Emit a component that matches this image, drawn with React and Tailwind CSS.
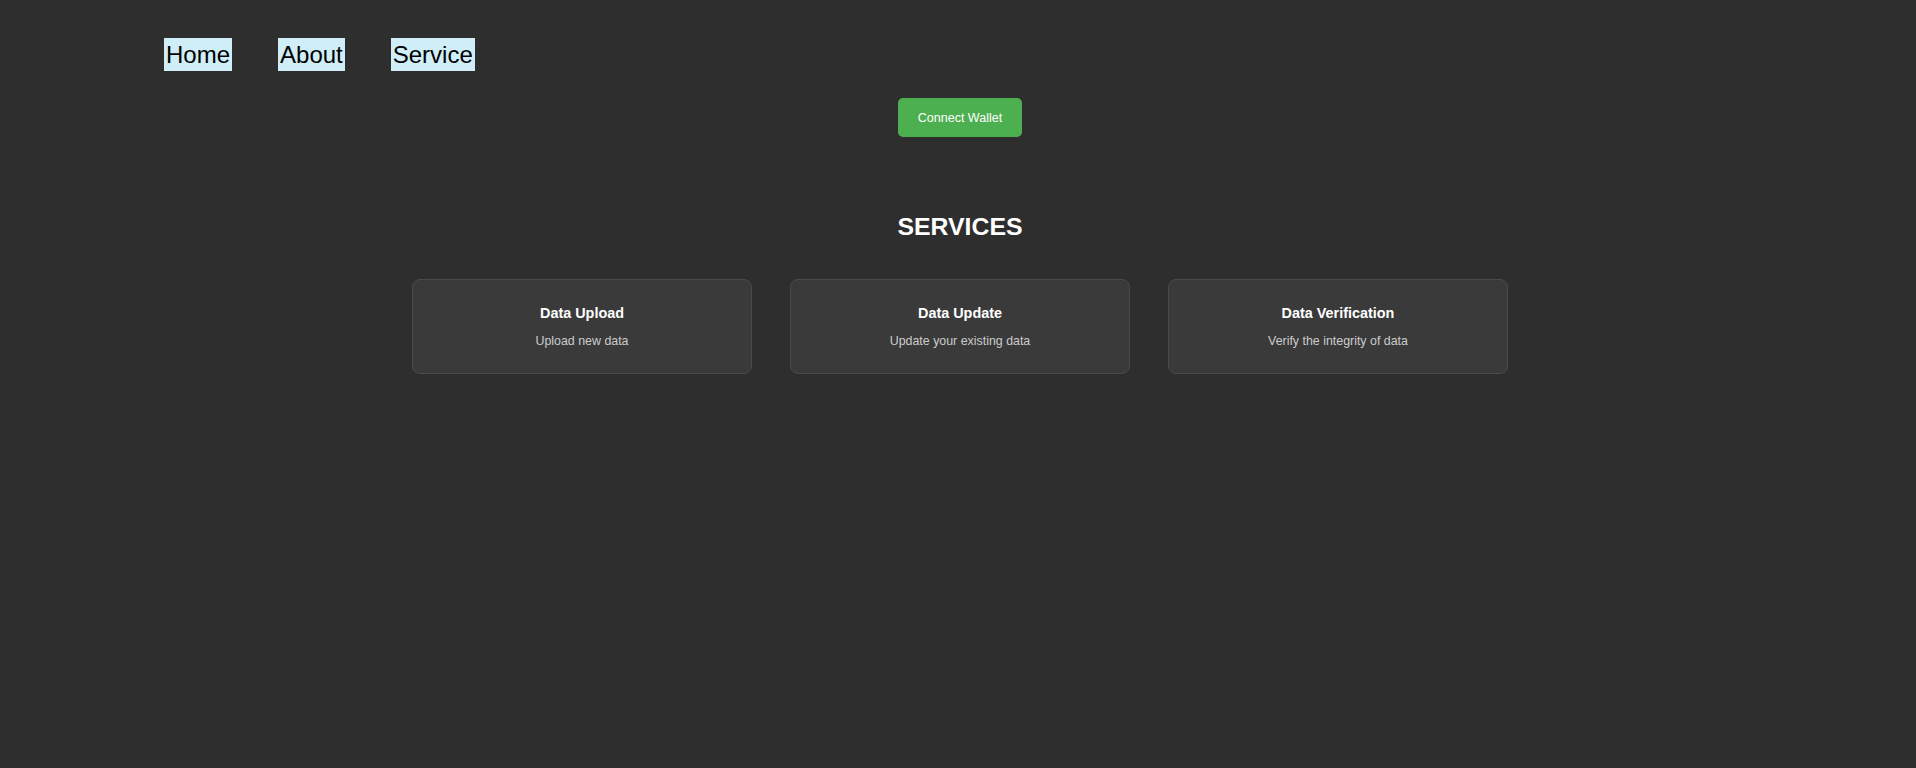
const services = [
  { title: "Data Upload", desc: "Upload new data" },
  { title: "Data Update", desc: "Update your existing data" },
  { title: "Data Verification", desc: "Verify the integrity of data" },
];

const navItems = ["Home", "About", "Service"];

export default function App() {
  return (
    <div className="min-h-screen bg-[#2e2e2e] font-['Liberation_Sans',Arial,sans-serif]">
      {/* Nav */}
      <nav className="flex gap-[46px] pt-[38px] pl-[164px]">
        {navItems.map((item) => (
          <a
            key={item}
            href="#"
            className="h-[33px] px-[2px] bg-[#cfeef8] text-black text-[24px] leading-[33px]"
          >
            {item}
          </a>
        ))}
      </nav>

      <main className="flex flex-col items-center pl-[4px]">
        <button className="mt-[27px] w-[124px] h-[39px] pt-[2px] rounded-[5px] bg-[#4caf50] text-white text-[12.5px]">
          Connect Wallet
        </button>

        <h2 className="mt-[76px] text-white text-[24.8px] font-bold leading-[28px]">
          SERVICES
        </h2>

        {/* Services cards */}
        <div className="mt-[38px] flex gap-[38px]">
          {services.map((s) => (
            <div
              key={s.title}
              className="w-[340px] h-[95px] pt-[25px] rounded-[8px] border border-[#4a4a4a] bg-[#3a3a3a] text-center"
            >
              <h3 className="text-white text-[14.4px] font-bold leading-[17px] mb-[12px]">
                {s.title}
              </h3>
              <p className="text-[#cccccc] text-[12.4px] leading-[14px]">{s.desc}</p>
            </div>
          ))}
        </div>
      </main>
    </div>
  );
}
